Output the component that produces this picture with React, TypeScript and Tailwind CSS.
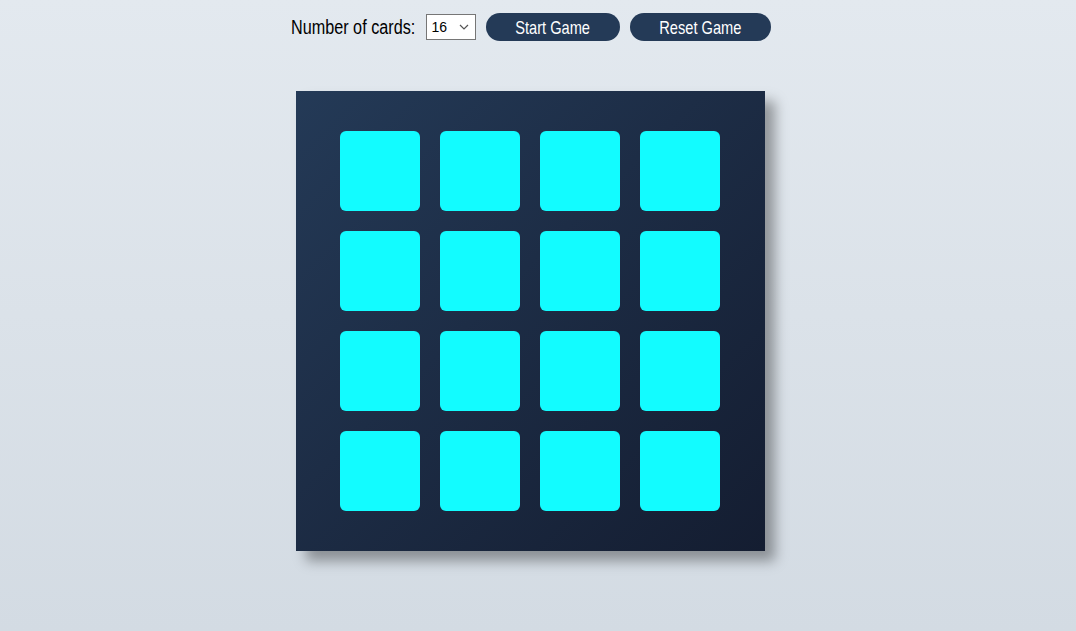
import React from "react";

export default function App() {
  const cards = Array.from({ length: 16 }, (_, i) => i);
  return (
    <div
      className="min-h-[631px] w-full pr-[15px] bg-gradient-to-b from-[#e3e9ef] to-[#d3dbe3] flex flex-col items-center"
      style={{ fontFamily: '"Liberation Sans", Arial, sans-serif' }}
    >
      <div className="flex items-center h-[28px] mt-[13px] text-black">
        <span className="w-[124px] text-[20px] leading-none whitespace-nowrap">
          <span className="inline-block origin-left scale-x-[0.81]">Number of cards:</span>
        </span>
        <div className="ml-[11px] relative w-[50px] h-[26px] bg-white border border-[#767676] flex items-center pl-[5px] text-[14px]">
          16
          <svg className="absolute right-[6px] top-[9px]" width="10" height="6" viewBox="0 0 10 6">
            <path d="M1 1 L5 5 L9 1" fill="none" stroke="#555" strokeWidth="1.2" />
          </svg>
        </div>
        <button className="ml-[10px] w-[134px] h-[28px] rounded-full bg-[#243a57] text-white text-[19px] leading-none whitespace-nowrap">
          <span className="inline-block scale-x-[0.77]">Start Game</span>
        </button>
        <button className="ml-[10px] w-[141px] h-[28px] rounded-full bg-[#243a57] text-white text-[19px] leading-none whitespace-nowrap">
          <span className="inline-block scale-x-[0.77]">Reset Game</span>
        </button>
      </div>
      <div className="mt-[50px] w-[469px] h-[460px] pl-[44px] bg-gradient-to-br from-[#243a57] to-[#141d31] shadow-[10px_10px_12px_rgba(0,0,0,0.35)] flex items-center">
        <div className="grid grid-cols-4 gap-[20px]">
          {cards.map((c) => (
            <div key={c} className="w-[80px] h-[80px] rounded-[6px] bg-[#12fcff]" />
          ))}
        </div>
      </div>
    </div>
  );
}
